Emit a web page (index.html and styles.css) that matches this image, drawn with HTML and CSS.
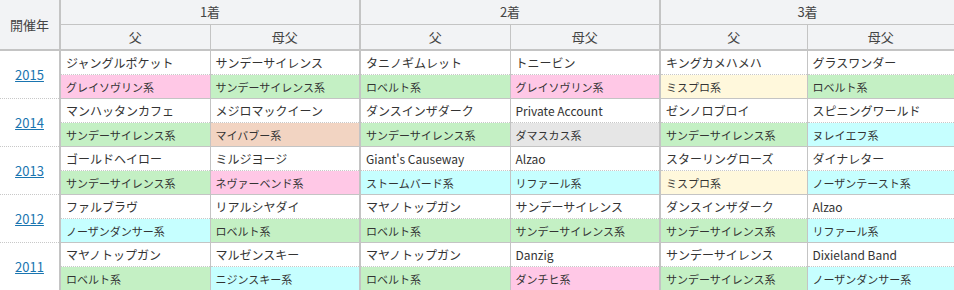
FILE: index.html
```html
<!DOCTYPE html>
<html lang="ja">
<head>
<meta charset="utf-8">
<link rel="stylesheet" href="styles.css">
</head>
<body>
<table class="tbl">
  <colgroup>
    <col class="c-year">
    <col class="c-sub"><col class="c-sub">
    <col class="c-sub"><col class="c-sub">
    <col class="c-last"><col class="c-last">
  </colgroup>
  <thead>
    <tr>
      <th rowspan="2" class="h-year">開催年</th>
      <th colspan="2" class="grp">1着</th>
      <th colspan="2" class="grp">2着</th>
      <th colspan="2" class="grp last">3着</th>
    </tr>
    <tr>
      <th class="sub">父</th><th class="sub grp-end">母父</th>
      <th class="sub">父</th><th class="sub grp-end">母父</th>
      <th class="sub">父</th><th class="sub">母父</th>
    </tr>
  </thead>
  <tbody>
    <tr class="name">
      <td rowspan="2" class="year"><a href="#">2015</a></td>
      <td>ジャングルポケット</td><td class="grp-end">サンデーサイレンス</td>
      <td>タニノギムレット</td><td class="grp-end">トニービン</td>
      <td>キングカメハメハ</td><td>グラスワンダー</td>
    </tr>
    <tr class="line">
      <td class="pink">グレイソヴリン系</td><td class="green grp-end">サンデーサイレンス系</td>
      <td class="green">ロベルト系</td><td class="pink grp-end">グレイソヴリン系</td>
      <td class="yellow">ミスプロ系</td><td class="green">ロベルト系</td>
    </tr>
    <tr class="name">
      <td rowspan="2" class="year"><a href="#">2014</a></td>
      <td>マンハッタンカフェ</td><td class="grp-end">メジロマックイーン</td>
      <td>ダンスインザダーク</td><td class="grp-end">Private Account</td>
      <td>ゼンノロブロイ</td><td>スピニングワールド</td>
    </tr>
    <tr class="line">
      <td class="green">サンデーサイレンス系</td><td class="orange grp-end">マイバブー系</td>
      <td class="green">サンデーサイレンス系</td><td class="grey grp-end">ダマスカス系</td>
      <td class="green">サンデーサイレンス系</td><td class="cyan">ヌレイエフ系</td>
    </tr>
    <tr class="name">
      <td rowspan="2" class="year"><a href="#">2013</a></td>
      <td>ゴールドヘイロー</td><td class="grp-end">ミルジヨージ</td>
      <td>Giant's Causeway</td><td class="grp-end">Alzao</td>
      <td>スターリングローズ</td><td>ダイナレター</td>
    </tr>
    <tr class="line">
      <td class="green">サンデーサイレンス系</td><td class="pink grp-end">ネヴァーベンド系</td>
      <td class="cyan">ストームバード系</td><td class="cyan grp-end">リファール系</td>
      <td class="yellow">ミスプロ系</td><td class="cyan">ノーザンテースト系</td>
    </tr>
    <tr class="name">
      <td rowspan="2" class="year"><a href="#">2012</a></td>
      <td>ファルブラヴ</td><td class="grp-end">リアルシヤダイ</td>
      <td>マヤノトップガン</td><td class="grp-end">サンデーサイレンス</td>
      <td>ダンスインザダーク</td><td>Alzao</td>
    </tr>
    <tr class="line">
      <td class="cyan">ノーザンダンサー系</td><td class="green grp-end">ロベルト系</td>
      <td class="green">ロベルト系</td><td class="green grp-end">サンデーサイレンス系</td>
      <td class="green">サンデーサイレンス系</td><td class="cyan">リファール系</td>
    </tr>
    <tr class="name">
      <td rowspan="2" class="year"><a href="#">2011</a></td>
      <td>マヤノトップガン</td><td class="grp-end">マルゼンスキー</td>
      <td>マヤノトップガン</td><td class="grp-end">Danzig</td>
      <td>サンデーサイレンス</td><td>Dixieland Band</td>
    </tr>
    <tr class="line">
      <td class="green">ロベルト系</td><td class="cyan grp-end">ニジンスキー系</td>
      <td class="green">ロベルト系</td><td class="pink grp-end">ダンチヒ系</td>
      <td class="green">サンデーサイレンス系</td><td class="cyan">ノーザンダンサー系</td>
    </tr>
  </tbody>
</table>
</body>
</html>
```
FILE: styles.css
```css
html, body {
  margin: 0;
  padding: 0;
  background: #fff;
}
body {
  font-family: "Noto Sans CJK JP", "Noto Sans", sans-serif;
  color: #333;
}
.tbl {
  border-collapse: collapse;
  table-layout: fixed;
  width: 954px;
}
.c-year { width: 60px; }
.c-sub { width: 150px; }
.c-last { width: 147px; }

th {
  background: #f2f3f5;
  font-weight: normal;
  font-size: 13px;
  color: #444;
  height: 24px;
  padding: 0;
  text-align: center;
  border: 1px solid #c4c4c4;
  border-top: none;
  line-height: 22px;
}
.h-year {
  border-left: none;
  border-right: 2px solid #c4c4c4;
  border-bottom: 2px solid #c4c4c4;
}
.grp { border-right: 2px solid #c4c4c4; }
.grp.last { border-right: none; }
.sub { border-bottom: 2px solid #c4c4c4; }
.sub:last-child { border-right: none; }

td {
  padding: 0 0 0 5px;
  height: 23px;
  font-size: 12px;
  line-height: 22px;
  border-left: 1px solid #c4c4c4;
  border-right: 1px solid #c4c4c4;
  white-space: nowrap;
  overflow: hidden;
}
td:last-child { border-right: none; }
.grp-end { border-right: 2px solid #c4c4c4; }
tr.name td { border-bottom: 1px dotted #c8c8c8; }
tr.line td {
  font-size: 11px;
  border-bottom: 1px solid #c4c4c4;
}
td.year {
  padding: 0;
  text-align: center;
  border-left: none;
  border-right: 2px solid #c4c4c4;
  border-bottom: 1px solid #c4c4c4;
  font-size: 13px;
  background: #fff;
}
td.year a {
  color: #1a75b0;
  text-decoration: underline;
}

.pink { background: #ffc8e6; }
.green { background: #c4f0c4; }
.yellow { background: #fff8dc; }
.cyan { background: #c6ffff; }
.orange { background: #f2d4c2; }
.grey { background: #e6e6e6; }
```
